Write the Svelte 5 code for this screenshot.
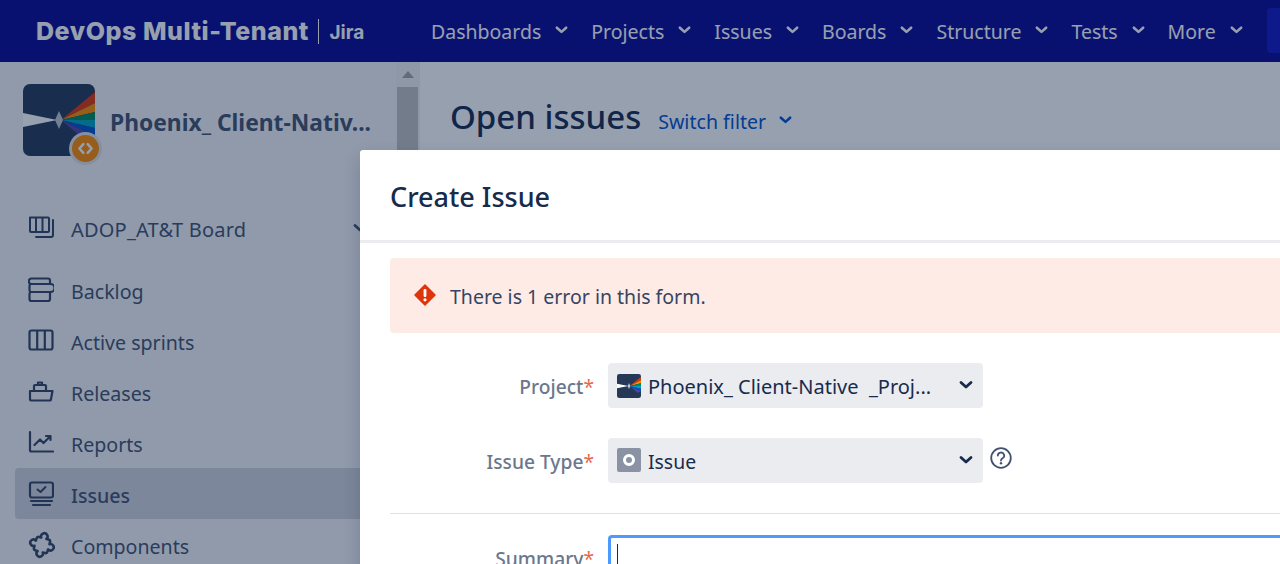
<script>
  const navItems = ['Dashboards', 'Projects', 'Issues', 'Boards', 'Structure', 'Tests', 'More'];
</script>

{#snippet chevron(cls)}
  <svg class={cls} viewBox="0 0 14 10" aria-hidden="true">
    <path d="M2 2.500 L7 7 L12 2.500" fill="none" stroke="currentColor" stroke-width="2.800" stroke-linecap="round" stroke-linejoin="round" />
  </svg>
{/snippet}

{#snippet prism(size)}
  <svg width={size} height={size} viewBox="0 0 72 72" class="prism" aria-hidden="true">
    <defs>
      <clipPath id="prism-clip-{size}"><rect width="72" height="72" rx="7" /></clipPath>
    </defs>
    <g clip-path="url(#prism-clip-{size})">
      <rect width="72" height="72" fill="#253858" />
      <path d="M0 29 L34 36 L0 43 Z" fill="#fff" />
      <path d="M38 36 L72 8 V19 Z" fill="#de350b" />
      <path d="M38 36 L72 19 V28 Z" fill="#ff8b00" />
      <path d="M38 36 L72 28 V36 Z" fill="#00875a" />
      <path d="M38 36 L72 36 V44 Z" fill="#00a3bf" />
      <path d="M38 36 L72 44 V52 Z" fill="#0052cc" />
      <path d="M38 36 L72 52 L62 56 Z" fill="#5243aa" />
      <path d="M36 27 L40 36 L36 45 L32 36 Z" fill="#c1c7d0" />
    </g>
  </svg>
{/snippet}

<div class="page">
  <header class="topbar">
    <div class="brand">
      <span class="brand-name">DevOps Multi-Tenant</span>
      <span class="brand-sep"></span>
      <span class="brand-jira">Jira</span>
    </div>
    <nav class="nav">
      {#each navItems as item}
        <span class="nav-item">{item}{@render chevron('nav-chevron')}</span>
      {/each}
    </nav>
    <div class="create-btn"></div>
  </header>

  <div class="content">
    <aside class="sidebar">
      <div class="side-inner">
        <div class="project-head">
          <div class="project-logo">
            {@render prism(72)}
            <span class="project-badge">
              <svg viewBox="0 0 24 24" width="21" height="21" aria-hidden="true">
                <path d="M9.500 7 L5 12 L9.500 17 M14.500 7 L19 12 L14.500 17" fill="none" stroke="#fff" stroke-width="2.800" stroke-linecap="round" stroke-linejoin="round" />
              </svg>
            </span>
          </div>
          <span class="project-name">Phoenix_ Client-Nativ...</span>
        </div>

        <div class="board-row">
          <svg class="side-icon" viewBox="0 0 26 26" aria-hidden="true">
            <path d="M2 2.500 H20 A1 1 0 0 1 21 3.500 V16 A1 1 0 0 1 20 17 H3 A1 1 0 0 1 2 16 Z M8 2.500 V17 M14.500 2.500 V17 M25 5 V20 A2 2 0 0 1 23 22 H8" fill="none" stroke="currentColor" stroke-width="2" stroke-linecap="round" stroke-linejoin="round" />
          </svg>
          <span class="side-text">ADOP_AT&amp;T Board</span>
          {@render chevron('board-chevron')}
        </div>

        <ul class="side-list">
          <li>
            <svg class="side-icon" viewBox="0 0 26 26" aria-hidden="true">
              <path d="M3.500 1.500 H20 A2 2 0 0 1 22 3.500 V7 H3.500 A2.500 2.500 0 0 1 3.500 1.500 Z" fill="none" stroke="currentColor" stroke-width="2.200" />
              <path d="M3.500 7 H22.500 A2.800 2.800 0 0 1 22.500 15 H3.500 A2 2 0 0 1 1.500 13 V9 A2 2 0 0 1 3.500 7 Z" fill="none" stroke="currentColor" stroke-width="2.200" />
              <path d="M3.500 15 H22 V22 A2 2 0 0 1 20 24 H3.500 A2 2 0 0 1 1.500 22 V17 A2 2 0 0 1 3.500 15 Z" fill="none" stroke="currentColor" stroke-width="2.200" />
            </svg>
            <span class="side-text">Backlog</span>
          </li>
          <li>
            <svg class="side-icon" viewBox="0 0 26 26" aria-hidden="true">
              <rect x="1.500" y="2.500" width="23" height="19" rx="2" fill="none" stroke="currentColor" stroke-width="2.200" />
              <path d="M9.200 2.500 V21.500 M16.800 2.500 V21.500" stroke="currentColor" stroke-width="2.200" />
            </svg>
            <span class="side-text">Active sprints</span>
          </li>
          <li>
            <svg class="side-icon" viewBox="0 0 26 26" aria-hidden="true">
              <path d="M2 12 H24.500 L23 20 A1.500 1.500 0 0 1 21.500 21.500 H3 A1 1 0 0 1 2 20.500 Z" fill="none" stroke="currentColor" stroke-width="2.200" stroke-linejoin="round" />
              <path d="M6 12 V7 A1 1 0 0 1 7 6 H17 A1 1 0 0 1 18 7 V12 M10 6 V3.500 H14 V6" fill="none" stroke="currentColor" stroke-width="2.200" stroke-linejoin="round" />
            </svg>
            <span class="side-text">Releases</span>
          </li>
          <li>
            <svg class="side-icon" viewBox="0 0 26 26" aria-hidden="true">
              <path d="M2 2 V20 A1.500 1.500 0 0 0 3.500 21.500 H25 M6.500 15 L12 9.500 L15.500 13 L22 6.500 M18 6 H22.500 V10" fill="none" stroke="currentColor" stroke-width="2.200" stroke-linecap="round" stroke-linejoin="round" />
            </svg>
            <span class="side-text">Reports</span>
          </li>
          <li class="active">
            <svg class="side-icon" viewBox="0 0 26 26" aria-hidden="true">
              <rect x="2" y="1.500" width="23" height="15" rx="2" fill="none" stroke="currentColor" stroke-width="2.200" />
              <path d="M9.500 8.500 L12.500 11 L17.500 6" fill="none" stroke="currentColor" stroke-width="2" stroke-linecap="round" stroke-linejoin="round" />
              <path d="M3 20 H24 M5 24 H22" stroke="currentColor" stroke-width="2.200" stroke-linecap="round" />
            </svg>
            <span class="side-text">Issues</span>
          </li>
          <li>
            <svg class="side-icon puzzle" viewBox="0 0 26 26" aria-hidden="true">
              <path transform="rotate(15 13 13)" d="M6.500 8.500 A2 2 0 0 1 8.500 6.500 H10.500 A3 3 0 1 1 15.500 6.500 H17.500 A2 2 0 0 1 19.500 8.500 V10.500 A3 3 0 1 1 19.500 15.500 V17.500 A2 2 0 0 1 17.500 19.500 H15.500 A3 3 0 1 1 10.500 19.500 H8.500 A2 2 0 0 1 6.500 17.500 V15.500 A3 3 0 1 1 6.500 10.500 Z" fill="none" stroke="currentColor" stroke-width="2.400" stroke-linejoin="round" />
            </svg>
            <span class="side-text">Components</span>
          </li>
        </ul>
      </div>
      <div class="scrollbar">
        <span class="scroll-arrow"></span>
        <span class="scroll-thumb"></span>
      </div>
    </aside>

    <main class="main">
      <h1>Open issues</h1>
      <span class="switch-filter">Switch filter{@render chevron('filter-chevron')}</span>
    </main>
  </div>

  <div class="blanket"></div>

  <section class="modal">
    <h2 class="modal-title">Create Issue</h2>
    <div class="modal-body">
      <div class="error-box">
        <svg class="error-icon" viewBox="0 0 22 22" aria-hidden="true">
          <path d="M11 1 L21 11 L11 21 L1 11 Z" fill="#de350b" stroke="#de350b" stroke-linejoin="round" stroke-width="1.500" />
          <rect x="9.600" y="5" width="2.800" height="8" rx="1.200" fill="#fff" />
          <circle cx="11" cy="15.800" r="1.600" fill="#fff" />
        </svg>
        <span class="error-text">There is 1 error in this form.</span>
      </div>

      <div class="field">
        <span class="field-label">Project<em>*</em></span>
        <div class="select">
          {@render prism(24)}
          <span class="select-text">Phoenix_ Client-Native&nbsp; _Proj...</span>
          {@render chevron('select-chevron')}
        </div>
      </div>

      <div class="field">
        <span class="field-label">Issue Type<em>*</em></span>
        <div class="select">
          <span class="type-icon"></span>
          <span class="select-text short">Issue</span>
          {@render chevron('select-chevron')}
        </div>
        <svg class="help-icon" viewBox="0 0 22 22" aria-hidden="true">
          <circle cx="11" cy="11" r="9.800" fill="none" stroke="currentColor" stroke-width="1.800" />
          <path d="M7.800 8.600 A3.200 3 0 1 1 12.500 11.200 C11.500 11.800 11 12.200 11 13.500" fill="none" stroke="currentColor" stroke-width="1.800" stroke-linecap="round" />
          <circle cx="11" cy="16.300" r="1.200" fill="currentColor" />
        </svg>
      </div>

      <hr class="divider" />

      <div class="field">
        <span class="field-label">Summary<em>*</em></span>
        <div class="input"><span class="caret"></span></div>
      </div>
    </div>
  </section>
</div>

<style>
  :global(body) {
    margin: 0;
    background: #fff;
  }

  .page {
    position: relative;
    width: 1280px;
    height: 564px;
    overflow: hidden;
    font-family: "Noto Sans", "Open Sans", sans-serif;
    color: #172b4d;
  }

  .topbar {
    height: 62px;
    background: #090892;
    color: #fff;
    display: flex;
    align-items: center;
    padding-left: 36px;
  }

  .brand {
    display: flex;
    align-items: center;
    width: 395px;
    flex: none;
  }

  .brand-name {
    font-family: Inter, sans-serif;
    font-weight: 800;
    font-size: 25px;
    letter-spacing: 0.55px;
    white-space: nowrap;
  }

  .brand-sep {
    width: 1.500px;
    height: 25px;
    background: #fff;
    margin: 0 10px 0 9px;
  }

  .brand-jira {
    font-family: Inter, sans-serif;
    font-weight: 700;
    font-size: 19px;
    margin-top: 2px;
  }

  .nav {
    display: flex;
    gap: 23px;
    font-size: 19.500px;
  }

  .nav-item {
    display: flex;
    align-items: center;
    gap: 14px;
    white-space: nowrap;
  }

  .nav-item :global(.nav-chevron) {
    width: 13px;
    height: 10px;
    margin-top: -3px;
  }

  .create-btn {
    position: absolute;
    left: 1267px;
    top: 8px;
    width: 40px;
    height: 45px;
    background: #1217c2;
    border-radius: 4px;
  }

  .content {
    display: flex;
    height: 502px;
  }

  .sidebar {
    width: 420px;
    flex: none;
    background: #f4f5f7;
    display: flex;
  }

  .side-inner {
    flex: 1;
    min-width: 0;
    padding: 22px 0 0 15px;
    color: #42526e;
  }

  .project-head {
    display: flex;
    align-items: center;
    gap: 15px;
    padding-left: 8px;
  }

  .project-logo {
    position: relative;
    width: 72px;
    height: 72px;
    flex: none;
  }

  .prism {
    display: block;
    flex: none;
  }

  .project-badge {
    position: absolute;
    left: 49px;
    top: 51px;
    width: 27px;
    height: 27px;
    border-radius: 50%;
    background: #ff8b00;
    box-shadow: 0 0 0 3px #dfe1e6;
    display: flex;
    align-items: center;
    justify-content: center;
  }

  .project-name {
    font-size: 22.800px;
    font-weight: 700;
    white-space: nowrap;
    margin-top: 4px;
  }

  .board-row {
    display: flex;
    align-items: center;
    height: 40px;
    margin-top: 52px;
    padding-left: 13px;
    font-size: 20px;
    letter-spacing: 0.2px;
    position: relative;
  }

  .side-icon {
    width: 26px;
    height: 26px;
    flex: none;
    margin-right: 17px;
    color: #344563;
  }

  .side-icon.puzzle {
    width: 28px;
    height: 28px;
    margin-right: 15px;
  }

  .side-text {
    padding-top: 4px;
  }

  .board-row .side-text {
    padding-top: 2px;
  }

  .board-row :global(.board-chevron) {
    position: absolute;
    left: 338px;
    top: 15px;
    width: 14px;
    height: 10px;
  }

  .side-list {
    list-style: none;
    margin: 16px 0 0;
    padding: 0;
  }

  .side-list li {
    display: flex;
    align-items: center;
    height: 51px;
    padding-left: 13px;
    font-size: 19.600px;
    border-radius: 4px;
  }

  .side-list li.active {
    background: #d0d4dc;
    font-weight: 500;
    width: 420px;
  }

  .scrollbar {
    width: 24px;
    flex: none;
    background: #f1f1f1;
    position: relative;
    padding-top: 25px;
    box-sizing: border-box;
  }

  .scroll-arrow {
    position: absolute;
    left: 6px;
    top: 9px;
    border-left: 6px solid transparent;
    border-right: 6px solid transparent;
    border-bottom: 7px solid #a3a3a3;
  }

  .scroll-thumb {
    display: block;
    width: 21px;
    height: 300px;
    margin-left: 1px;
    background: #c1c1c1;
  }

  .main {
    flex: 1;
    background: #fff;
    padding: 32px 0 0 30px;
    display: flex;
    align-items: baseline;
    gap: 17px;
  }

  h1 {
    margin: 0;
    font-size: 33px;
    font-weight: 500;
    line-height: 46px;
    color: #172b4d;
  }

  .switch-filter {
    display: inline-flex;
    align-items: center;
    gap: 13px;
    font-size: 19.600px;
    color: #0052cc;
  }

  .switch-filter :global(.filter-chevron) {
    width: 13px;
    height: 10px;
    margin-top: -3px;
  }

  .blanket {
    position: absolute;
    inset: 0;
    background: rgba(9, 30, 66, 0.423);
  }

  .modal {
    position: absolute;
    left: 360px;
    top: 150px;
    width: 1000px;
    height: 500px;
    background: #fff;
    border-radius: 3px;
    box-shadow: 0 8px 18px rgba(9, 30, 66, 0.18);
  }

  .modal-title {
    margin: 0;
    height: 93px;
    box-sizing: border-box;
    padding: 27px 30px 0;
    font-size: 27px;
    font-weight: 500;
    line-height: 40px;
    border-bottom: 3px solid #ebecf0;
    color: #172b4d;
  }

  .modal-body {
    padding: 15px 30px 0;
  }

  .error-box {
    display: flex;
    align-items: center;
    height: 75px;
    padding-left: 24px;
    background: #ffebe6;
    border-radius: 4px;
    font-size: 19.500px;
    color: #344563;
    margin-bottom: 30px;
  }

  .error-icon {
    width: 22px;
    height: 22px;
    margin-right: 14px;
    margin-top: -1px;
  }

  .error-text {
    padding-top: 2px;
  }

  .field {
    display: flex;
    align-items: center;
    height: 45px;
    margin-bottom: 30px;
    font-size: 20px;
  }

  .field-label {
    width: 204px;
    margin-right: 14px;
    padding-top: 2px;
    flex: none;
    text-align: right;
    color: #6b778c;
    font-size: 19.200px;
    font-weight: 500;
  }

  .field-label em {
    font-style: normal;
    font-weight: 400;
    color: #de350b;
    opacity: 0.75;
  }

  .select {
    width: 375px;
    height: 45px;
    flex: none;
    box-sizing: border-box;
    padding-left: 9px;
    background: #ebecf0;
    border-radius: 4px;
    display: flex;
    align-items: center;
    position: relative;
  }

  .select-text {
    margin-left: 7px;
    padding-top: 2px;
    white-space: nowrap;
  }

  .select-text.short {
    font-size: 19.400px;
  }

  .select :global(.select-chevron) {
    position: absolute;
    right: 10px;
    top: 17px;
    width: 14px;
    height: 10px;
  }

  .type-icon {
    width: 24px;
    height: 24px;
    flex: none;
    background: #8993a4;
    border-radius: 2px;
    position: relative;
    margin-top: -2px;
  }

  .type-icon::after {
    content: "";
    position: absolute;
    left: 6px;
    top: 6px;
    width: 12px;
    height: 12px;
    box-sizing: border-box;
    border: 3px solid #fff;
    border-radius: 50%;
  }

  .help-icon {
    width: 22px;
    height: 22px;
    margin-left: 7px;
    margin-top: -5px;
    color: #42526e;
  }

  .divider {
    border: 0;
    border-top: 1px solid #dfe1e6;
    margin: 0 0 21px;
  }

  .input {
    flex: 1;
    height: 45px;
    box-sizing: border-box;
    border: 3px solid #4c9aff;
    border-radius: 4px;
    padding: 6px;
  }

  .caret {
    display: block;
    width: 1px;
    height: 21px;
    background: #172b4d;
  }
</style>
